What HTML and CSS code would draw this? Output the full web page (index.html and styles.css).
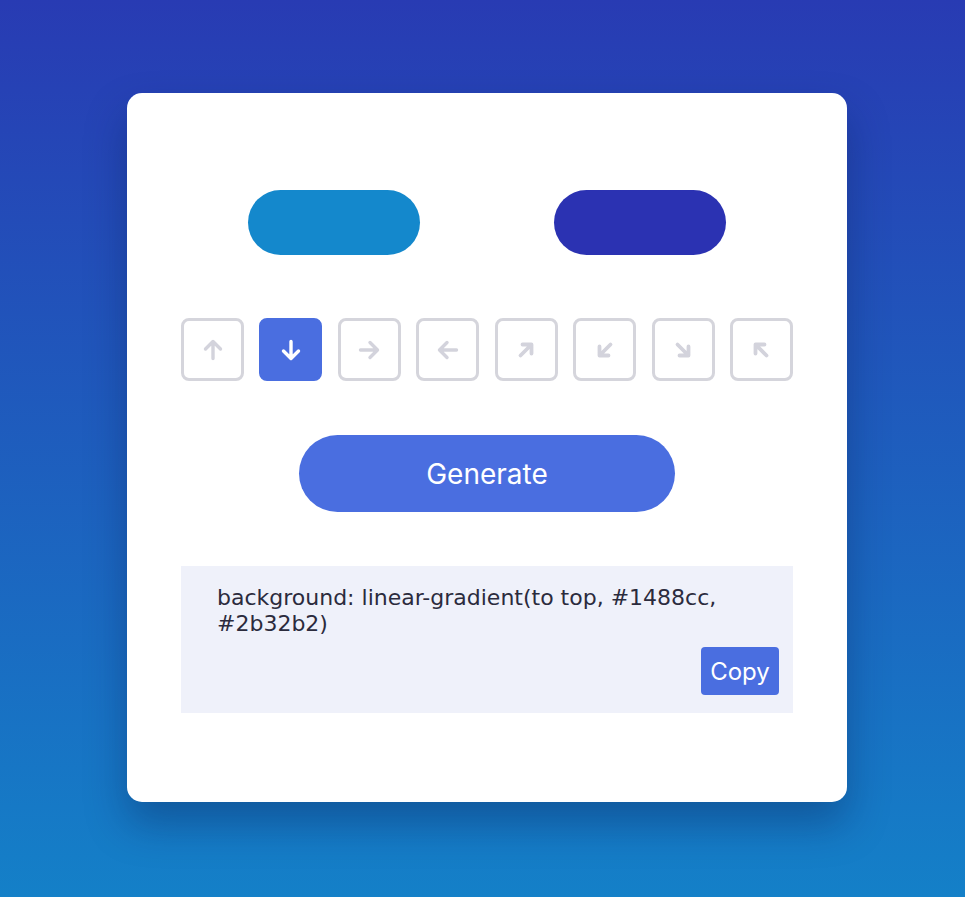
FILE: index.html
```html
<!DOCTYPE html>
<html lang="en">
<head>
<meta charset="utf-8">
<title>Gradient Generator</title>
<link rel="stylesheet" href="styles.css">
</head>
<body>
<main class="card">
  <div class="colors">
    <div class="swatch swatch-from"></div>
    <div class="swatch swatch-to"></div>
  </div>
  <div class="directions">
    <button class="dir"><svg viewBox="0 0 24 24"><path d="M12 20.5V3.5M4.5 11L12 3.5l7.5 7.5"/></svg></button>
    <button class="dir active"><svg viewBox="0 0 24 24"><path d="M12 3.5v17M4.5 13l7.5 7.5 7.5-7.5"/></svg></button>
    <button class="dir"><svg viewBox="0 0 24 24"><path d="M3.5 12h17M13 4.5l7.5 7.5-7.5 7.5"/></svg></button>
    <button class="dir"><svg viewBox="0 0 24 24"><path d="M20.5 12h-17M11 4.5L3.5 12l7.5 7.5"/></svg></button>
    <button class="dir"><svg class="diag" viewBox="0 0 24 24"><path d="M6.5 17.5L17 7M8.5 6.5h9v9"/></svg></button>
    <button class="dir"><svg class="diag" viewBox="0 0 24 24"><path d="M17.5 6.5L7 17M6.5 8.5v9h9"/></svg></button>
    <button class="dir"><svg class="diag" viewBox="0 0 24 24"><path d="M6.5 6.5L17 17M17.5 8.5v9h-9"/></svg></button>
    <button class="dir"><svg class="diag" viewBox="0 0 24 24"><path d="M17.5 17.5L7 7M6.5 15.5v-9h9"/></svg></button>
  </div>
  <div class="actions">
    <button class="generate">Generate</button>
  </div>
  <div class="output">
    <p class="code">background: linear-gradient(to top, #1488cc, #2b32b2)</p>
    <div class="copy-row"><button class="copy">Copy</button></div>
  </div>
</main>
</body>
</html>
```
FILE: styles.css
```css
html, body {
  margin: 0;
  height: 100%;
}
body {
  background: linear-gradient(to top, #1480c8, #283bb3);
  display: flex;
  align-items: center;
  justify-content: center;
  padding-left: 9px;
  box-sizing: border-box;
  font-family: "Inter", "Roboto", sans-serif;
}
.card {
  width: 720px;
  height: 709px;
  box-sizing: border-box;
  background: #fff;
  border-radius: 15px;
  padding: 97px 54px 0;
  box-shadow: 0 22px 40px rgba(10, 30, 80, 0.35);
  margin-top: -2px;
}
.colors {
  display: flex;
  justify-content: center;
  gap: 134px;
}
.swatch {
  width: 172px;
  height: 65px;
  border-radius: 33px;
}
.swatch-from { background: #1488cc; }
.swatch-to { background: #2b32b2; }
.directions {
  display: flex;
  justify-content: space-between;
  margin-top: 63px;
}
.dir {
  width: 63px;
  height: 63px;
  box-sizing: border-box;
  border: 3px solid #d5d5dc;
  border-radius: 8px;
  background: #fff;
  padding: 0;
  display: flex;
  align-items: center;
  justify-content: center;
}
.dir svg {
  width: 24px;
  height: 24px;
  fill: none;
  stroke: #d3d3dc;
  stroke-width: 3.4;
  stroke-linecap: round;
  stroke-linejoin: round;
}
.dir svg.diag {
  stroke-width: 3.8;
}
.dir.active {
  background: #4a6ee0;
  border-color: #4a6ee0;
}
.dir.active svg { stroke: #fff; }
.actions {
  display: flex;
  justify-content: center;
  margin-top: 54px;
}
.generate {
  width: 376px;
  height: 77px;
  border: none;
  border-radius: 39px;
  background: #4a6ee0;
  color: #fff;
  font-family: inherit;
  font-size: 28px;
  padding: 0;
}
.output {
  margin-top: 54px;
  background: #eff1fa;
  height: 147px;
  box-sizing: border-box;
  padding: 19px 14px 18px 36px;
}
.code {
  margin: 0;
  padding-right: 22px;
  font-family: "DejaVu Sans", "Inter", sans-serif;
  font-size: 22px;
  line-height: 26px;
  color: #2b2b3d;
}
.copy-row {
  display: flex;
  justify-content: flex-end;
  margin-top: 10px;
}
.copy {
  width: 78px;
  height: 48px;
  border: none;
  border-radius: 4px;
  background: #4a6ee0;
  color: #fff;
  font-family: inherit;
  font-size: 24px;
  padding: 0;
}
```
